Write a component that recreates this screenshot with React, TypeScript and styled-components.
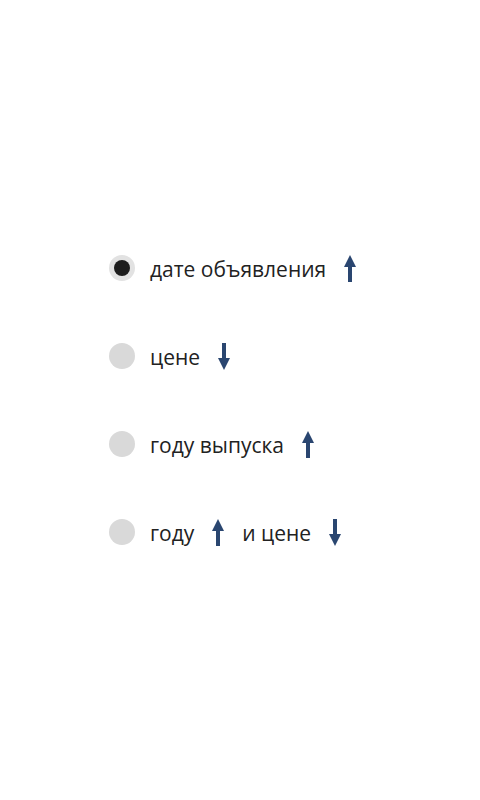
import React from "react";
import styled, { createGlobalStyle } from "styled-components";

const Global = createGlobalStyle`
  html, body { margin: 0; padding: 0; background: #fff; }
  body { font-family: "Open Sans", "Noto Sans", sans-serif; }
`;

const Page = styled.div`
  width: 480px;
  height: 800px;
  display: flex;
  flex-direction: column;
  justify-content: center;
  padding-left: 109px;
  box-sizing: border-box;
`;

const List = styled.div`
  display: flex;
  flex-direction: column;
  gap: 62px;
`;

const Row = styled.label`
  display: flex;
  align-items: center;
  height: 26px;
  cursor: pointer;
`;

const Radio = styled.span<{ $checked?: boolean }>`
  width: 26px;
  height: 26px;
  border-radius: 50%;
  background: ${(p) => (p.$checked ? "#e2e2e2" : "#d9d9d9")};
  display: flex;
  align-items: center;
  justify-content: center;
  margin-right: 15px;
  flex: none;
  &::after {
    content: "";
    display: ${(p) => (p.$checked ? "block" : "none")};
    width: 16px;
    height: 16px;
    border-radius: 50%;
    background: #1c1c1c;
  }
`;

const Label = styled.span`
  font-size: 21px;
  color: #222;
  line-height: 26px;
  padding-top: 2px;
`;

const ArrowBox = styled.span`
  display: inline-flex;
  margin: 0 18px 0 18px;
  width: 12px;
  height: 27px;
`;

const Arrow = ({ down }: { down?: boolean }) => (
  <ArrowBox>
    <svg width="12" height="27" viewBox="0 0 12 27">
      <g transform={down ? "rotate(180 6 13.5)" : undefined}>
        <polygon points="6,0 12,12 0,12" fill="#2a4670" />
        <rect x="4" y="10" width="4" height="17" fill="#2a4670" />
      </g>
    </svg>
  </ArrowBox>
);

export default function App() {
  return (
    <>
      <Global />
      <Page>
        <List>
          <Row>
            <Radio $checked />
            <Label>дате объявления</Label>
            <Arrow />
          </Row>
          <Row>
            <Radio />
            <Label>цене</Label>
            <Arrow down />
          </Row>
          <Row>
            <Radio />
            <Label>году выпуска</Label>
            <Arrow />
          </Row>
          <Row>
            <Radio />
            <Label>году</Label>
            <Arrow />
            <Label>и цене</Label>
            <Arrow down />
          </Row>
        </List>
      </Page>
    </>
  );
}
